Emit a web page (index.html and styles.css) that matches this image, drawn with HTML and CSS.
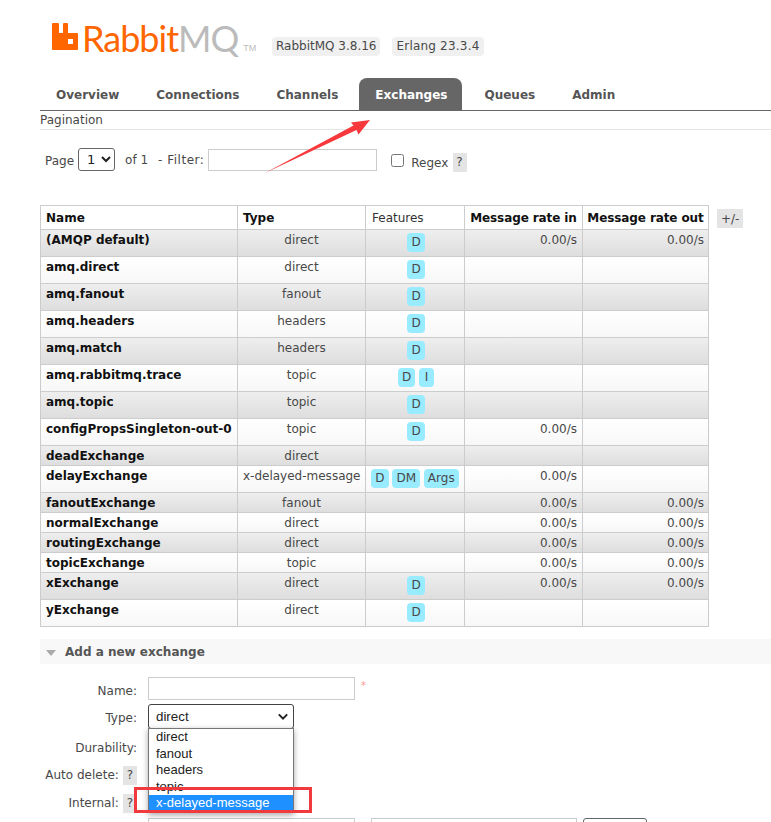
FILE: index.html
```html
<!DOCTYPE html>
<html lang="en">
<head>
<meta charset="utf-8">
<title>RabbitMQ Management</title>
<link rel="stylesheet" href="styles.css">
</head>
<body>
<header class="top">
  <div class="logo">
    <svg class="logo-mark" viewBox="0 0 26 27" width="26" height="27"><path fill="#ff6600" d="M1 0h5q1 0 1 1v9h4V1q0-1 1-1h3q1 0 1 1v9h9q1 0 1 1v15q0 1-1 1H1q-1 0-1-1V1q0-1 1-1z"/><rect x="16" y="16" width="5" height="5" fill="#fff"/></svg>
    <span class="logo-text">Rabbit<span class="logo-mq">MQ</span></span><span class="logo-tm">TM</span>
  </div>
  <span class="version">RabbitMQ 3.8.16</span>
  <span class="version version-erlang">Erlang 23.3.4</span>
</header>
<nav class="tabs">
  <a class="tab">Overview</a><a class="tab">Connections</a><a class="tab">Channels</a><a class="tab active">Exchanges</a><a class="tab">Queues</a><a class="tab">Admin</a>
</nav>
<main class="main">
  <div class="pagination-title">Pagination</div>
  <div class="filter">
    <span class="f-page">Page</span>
    <select class="sel-page"><option>1</option></select>
    <span class="f-of">of 1</span>
    <span class="f-filter">- Filter:</span>
    <input class="input filter-input" type="text">
    <input class="check" type="checkbox">
    <span class="f-regex">Regex</span>
    <span class="help f-help">?</span>
  </div>
  <div class="table-wrap">
    <table class="list">
      <colgroup><col class="c1"><col class="c2"><col class="c3"><col class="c4"><col class="c5"></colgroup>
      <thead>
        <tr><th class="name">Name</th><th class="name">Type</th><th class="feat">Features</th><th class="rate">Message rate in</th><th class="rate">Message rate out</th></tr>
      </thead>
      <tbody>
        <tr class="alt"><td class="n">(AMQP default)</td><td class="t">direct</td><td class="t f"><span class="pill">D</span></td><td class="r">0.00/s</td><td class="r">0.00/s</td></tr>
        <tr><td class="n">amq.direct</td><td class="t">direct</td><td class="t f"><span class="pill">D</span></td><td></td><td></td></tr>
        <tr class="alt"><td class="n">amq.fanout</td><td class="t">fanout</td><td class="t f"><span class="pill">D</span></td><td></td><td></td></tr>
        <tr><td class="n">amq.headers</td><td class="t">headers</td><td class="t f"><span class="pill">D</span></td><td></td><td></td></tr>
        <tr class="alt"><td class="n">amq.match</td><td class="t">headers</td><td class="t f"><span class="pill">D</span></td><td></td><td></td></tr>
        <tr><td class="n">amq.rabbitmq.trace</td><td class="t">topic</td><td class="t f"><span class="pill">D</span> <span class="pill pill-i">I</span></td><td></td><td></td></tr>
        <tr class="alt"><td class="n">amq.topic</td><td class="t">topic</td><td class="t f"><span class="pill">D</span></td><td></td><td></td></tr>
        <tr><td class="n">configPropsSingleton-out-0</td><td class="t">topic</td><td class="t f"><span class="pill">D</span></td><td class="r">0.00/s</td><td></td></tr>
        <tr class="alt"><td class="n">deadExchange</td><td class="t">direct</td><td></td><td></td><td></td></tr>
        <tr><td class="n">delayExchange</td><td class="t">x-delayed-message</td><td class="t"><span class="pill">D</span> <span class="pill">DM</span> <span class="pill">Args</span></td><td class="r">0.00/s</td><td></td></tr>
        <tr class="alt"><td class="n">fanoutExchange</td><td class="t">fanout</td><td></td><td class="r">0.00/s</td><td class="r">0.00/s</td></tr>
        <tr><td class="n">normalExchange</td><td class="t">direct</td><td></td><td class="r">0.00/s</td><td class="r">0.00/s</td></tr>
        <tr class="alt"><td class="n">routingExchange</td><td class="t">direct</td><td></td><td class="r">0.00/s</td><td class="r">0.00/s</td></tr>
        <tr><td class="n">topicExchange</td><td class="t">topic</td><td></td><td class="r">0.00/s</td><td class="r">0.00/s</td></tr>
        <tr class="alt"><td class="n">xExchange</td><td class="t">direct</td><td class="t f"><span class="pill">D</span></td><td class="r">0.00/s</td><td class="r">0.00/s</td></tr>
        <tr><td class="n">yExchange</td><td class="t">direct</td><td class="t f"><span class="pill">D</span></td><td></td><td></td></tr>
      </tbody>
    </table>
    <span class="help plusminus">+/-</span>
  </div>
  <section class="add">
    <h2 class="add-title"><span class="tri"></span>Add a new exchange</h2>
    <div class="form">
      <div class="row row-name"><label class="lab">Name:</label><input class="input w-name" type="text"><span class="req">*</span></div>
      <div class="row row-type"><label class="lab">Type:</label><div class="fake-select"><span>direct</span><svg width="10" height="7" viewBox="0 0 12 8"><path d="M1 1.500 6 6.500l5-5" fill="none" stroke="#222" stroke-width="2.400"/></svg></div></div>
      <div class="row row-dur"><label class="lab">Durability:</label></div>
      <div class="row row-auto"><label class="lab lab-help">Auto delete: <span class="help">?</span></label></div>
      <div class="row row-int"><label class="lab lab-help">Internal: <span class="help">?</span></label><span class="small-select"></span></div>
      <div class="row row-args"><input class="input w-name" type="text"><input class="input w-name2" type="text"><span class="arg-select"></span></div>
      <ul class="dropdown">
        <li>direct</li><li>fanout</li><li>headers</li><li>topic</li><li class="sel">x-delayed-message</li>
      </ul>
      <div class="red-box"></div>
    </div>
  </section>
</main>
<svg class="arrow" width="120" height="60" viewBox="260 118 120 60"><polygon fill="#f7383c" points="265,173 353.500,125.500 351,122.500 370,120 358.500,134.500 356.500,130"/></svg>
</body>
</html>
```
FILE: styles.css
```css
* { box-sizing: border-box; }
html, body { margin: 0; height: 822px; overflow: hidden; }
body { position: relative; background: #fff; color: #484848; font: 12px/15px "DejaVu Sans", Verdana, sans-serif; }
.top { display: flex; align-items: flex-start; height: 78px; padding: 23px 0 0 52px; }
.logo { display: flex; width: 220px; height: 32px; color: #ff6600; }
.logo-mark { flex: none; }
.logo-text { margin: -7px 0 0 4px; font: 400 36px/44px "Lato", sans-serif; letter-spacing: -1px; }
.logo-mq { color: #bbb; }
.logo-tm { margin: 20px 0 0 5px; color: #bbb; font: 9px/10px "Liberation Sans", sans-serif; }
.version { margin: 14px 12px 0 0; padding: 2px 4px; border-radius: 4px; background: #f0f0f0; }
.version-erlang { letter-spacing: .2px; }
.tabs { display: flex; gap: 5px; height: 33px; margin-left: 40px; padding-bottom: 0; border-bottom: 1px solid #666; }
.tab { height: 32px; padding: 10px 16px 0; border-radius: 8px 8px 0 0; color: #555; font-weight: bold; }
.active { margin-right: 1px; padding-right: 15px; background: #666; color: #fff; }
.main { margin-left: 40px; }
.pagination-title { height: 19px; padding-top: 2px; border-bottom: 1px solid #e4e4e4; }
.filter { display: flex; align-items: flex-start; height: 75px; padding: 19px 0 0 5px; }
.f-page { margin: 5px 4px 0 0; }
.sel-page { width: 37px; height: 23px; margin-top: -1px; padding: 0 0 0 4px; border: 1px solid #666; border-radius: 3px; background: #fff; color: #222; font: 13px "DejaVu Sans", sans-serif; }
.f-of { margin: 4px 0 0 10px; }
.f-filter { margin: 4px 0 0 10px; letter-spacing: .5px; }
.input { height: 23px; padding: 0; border: 1px solid #ccc; background: #fff; }
.filter-input { width: 169px; height: 22px; margin-left: 4px; }
.check { width: 13px; height: 13px; margin: 5px 0 0 14px; }
.f-regex { margin: 7px 0 0 7px; }
.help { display: inline-block; padding: 2px 4px; background: #e4e4e4; color: #484848; }
.f-help { width: 14px; height: 19px; margin: 4px 0 0 5px; padding: 2px 3px; }
.table-wrap { display: flex; align-items: flex-start; gap: 8px; }
.list { width: 668px; table-layout: fixed; border-collapse: collapse; }
.c1 { width: 197px; } .c2 { width: 128px; } .c3 { width: 99px; } .c4 { width: 118px; } .c5 { width: 126px; }
th, td { padding: 3px 5px 1px; border: 1px solid #ccc; vertical-align: top; white-space: nowrap; }
th { height: 24px; padding: 5px 4px 1px; color: #111; font-weight: bold; text-align: center; }
th.name { text-align: left; padding-left: 5px; }
th.feat { padding-left: 6px; font-weight: normal; color: #333; text-align: left; }
th.rate { letter-spacing: -.1px; }
tbody tr { background: linear-gradient(#fff, #f7f7f7); }
tbody tr.alt { background: linear-gradient(#eee, #ddd); }
.n { color: #111; font-weight: bold; }
.t { text-align: center; }
.f { padding-right: 4px; padding-left: 6px; }
.r { text-align: right; }
.r:last-child { padding-right: 4px; }
.pill { display: inline-block; min-width: 17px; height: 19px; margin: 0 0 3px; padding: 2px 4px; border-radius: 4px; background: #99ebff; color: #484848; }
.pill-i { min-width: 15px; }
.plusminus { height: 19px; margin-top: 4px; padding: 3px 4px 1px; }
.add { margin-top: 12px; }
.add-title { display: flex; align-items: center; height: 25px; margin: 0; padding: 2px 0 0 6px; background: #f8f8f8; color: #555; font-size: 12px; font-weight: bold; }
.tri { width: 0; height: 0; margin-right: 9px; border: 5.500px solid transparent; border-top: 6px solid #aaa; border-bottom: 0; }
.form { position: relative; padding-top: 13px; }
.row { display: flex; align-items: flex-start; }
.lab { width: 97px; margin-top: 7px; text-align: right; white-space: nowrap; }
.lab-help { margin-top: 4px; }
.row .input, .fake-select, .small-select { margin-left: 11px; }
.row-name { height: 27px; }
.row-type { height: 30px; }
.row-dur { height: 28px; }
.row-auto { height: 28px; }
.row-int { height: 28px; }
.row-args { padding-left: 97px; }
.w-name { width: 207px; }
.row .w-name2 { width: 206px; margin-left: 16px; }
.arg-select { width: 64px; height: 23px; margin-left: 6px; border: 1px solid #666; border-radius: 3px; }
.req { margin: 1px 0 0 6px; color: #f99; font-size: 10px; }
.fake-select { display: flex; align-items: center; justify-content: space-between; width: 146px; height: 25px; padding: 0 5px 0 7px; border: 1px solid #444; border-radius: 3px; color: #222; font: 13.330px "Liberation Sans", sans-serif; }
.small-select { width: 50px; height: 23px; border: 1px solid #666; border-radius: 3px; }
.dropdown { position: absolute; left: 108px; top: 64px; width: 146px; margin: 0; padding: 0; border: 1px solid #777; background: #fff; box-shadow: 0 2px 6px rgba(0,0,0,.35); color: #222; font: 13px/16.500px "Liberation Sans", sans-serif; list-style: none; }
.dropdown li { height: 16.500px; padding-left: 7px; }
.dropdown .sel { background: #1e90ff; color: #fff; }
.red-box { position: absolute; left: 94px; top: 123px; width: 178px; height: 26px; border: 3px solid #f03a3e; }
.arrow { position: absolute; left: 260px; top: 118px; }
```
